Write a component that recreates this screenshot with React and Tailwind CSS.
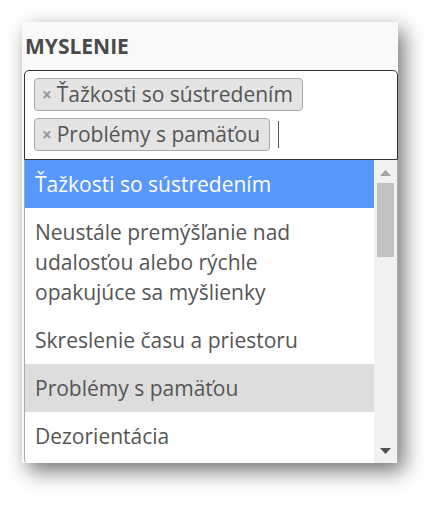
const selected = ['Ťažkosti so sústredením', 'Problémy s pamäťou'];

const options = [
  { label: 'Ťažkosti so sústredením', state: 'active' },
  { label: 'Neustále premýšľanie nad udalosťou alebo rýchle opakujúce sa myšlienky' },
  { label: 'Skreslenie času a priestoru' },
  { label: 'Problémy s pamäťou', state: 'selected' },
  { label: 'Dezorientácia' },
];

function Tag({ label }) {
  return (
    <li className="flex h-[33px] items-center rounded-[4px] border border-[#aaa] bg-[#e4e4e4] pl-[7px] pr-[9px]">
      <span className="mr-[5px] text-[17px] font-bold leading-none text-[#999]">×</span>
      <span className="text-[21px] leading-none text-[#555]">{label}</span>
    </li>
  );
}

export default function App() {
  return (
    <div className="h-[512px] w-[448px] bg-white pl-[22px] pt-[22px]" style={{ fontFamily: '"Open Sans", sans-serif' }}>
      <div className="flex h-[441px] w-[376px] flex-col overflow-hidden bg-[#f9f9f9] shadow-[6px_8px_20px_rgba(0,0,0,0.55)]">
        {/* Label */}
        <div className="pl-[3px] pt-[10px] text-[21px] font-bold leading-[28px] text-[#4a4a4a]">MYSLENIE</div>

        {/* Select box */}
        <div className="ml-[2px] mt-[10px] w-[374px] rounded-t-[5px] border border-[#333] bg-white px-[9px] pb-[8px] pt-[7px]">
          <ul className="flex flex-wrap items-center gap-x-[8px] gap-y-[7px]">
            {selected.map((s) => (
              <Tag key={s} label={s} />
            ))}
            <li className="h-[27px] w-px bg-[#555]" />
          </ul>
        </div>

        {/* Dropdown */}
        <div className="ml-[2px] flex min-h-0 w-[374px] flex-1 rounded-bl-[3px] border-x border-[#aaa] bg-white">
          <ul className="min-w-0 flex-1">
            {options.map((o) => (
              <li
                key={o.label}
                className={`py-[9px] pl-[10px] pr-[14px] text-[21px] leading-[30px] ${
                  o.state === 'active'
                    ? 'bg-[#5897fb] text-white'
                    : o.state === 'selected'
                    ? 'bg-[#ddd] text-[#555]'
                    : 'text-[#555]'
                }`}
              >
                {o.label}
              </li>
            ))}
          </ul>

          {/* Scrollbar */}
          <div className="flex w-[23px] shrink-0 flex-col items-center bg-[#f1f1f1] pt-[10px] pb-[9px]">
            <svg width="11" height="6" viewBox="0 0 11 6">
              <path d="M0 6 L5.5 0 L11 6 Z" fill="#a3a3a3" />
            </svg>
            <div className="mt-[7px] h-[74px] w-[17px] bg-[#c1c1c1]" />
            <div className="flex-1" />
            <svg width="11" height="6" viewBox="0 0 11 6">
              <path d="M0 0 L11 0 L5.5 6 Z" fill="#505050" />
            </svg>
          </div>
        </div>
      </div>
    </div>
  );
}
